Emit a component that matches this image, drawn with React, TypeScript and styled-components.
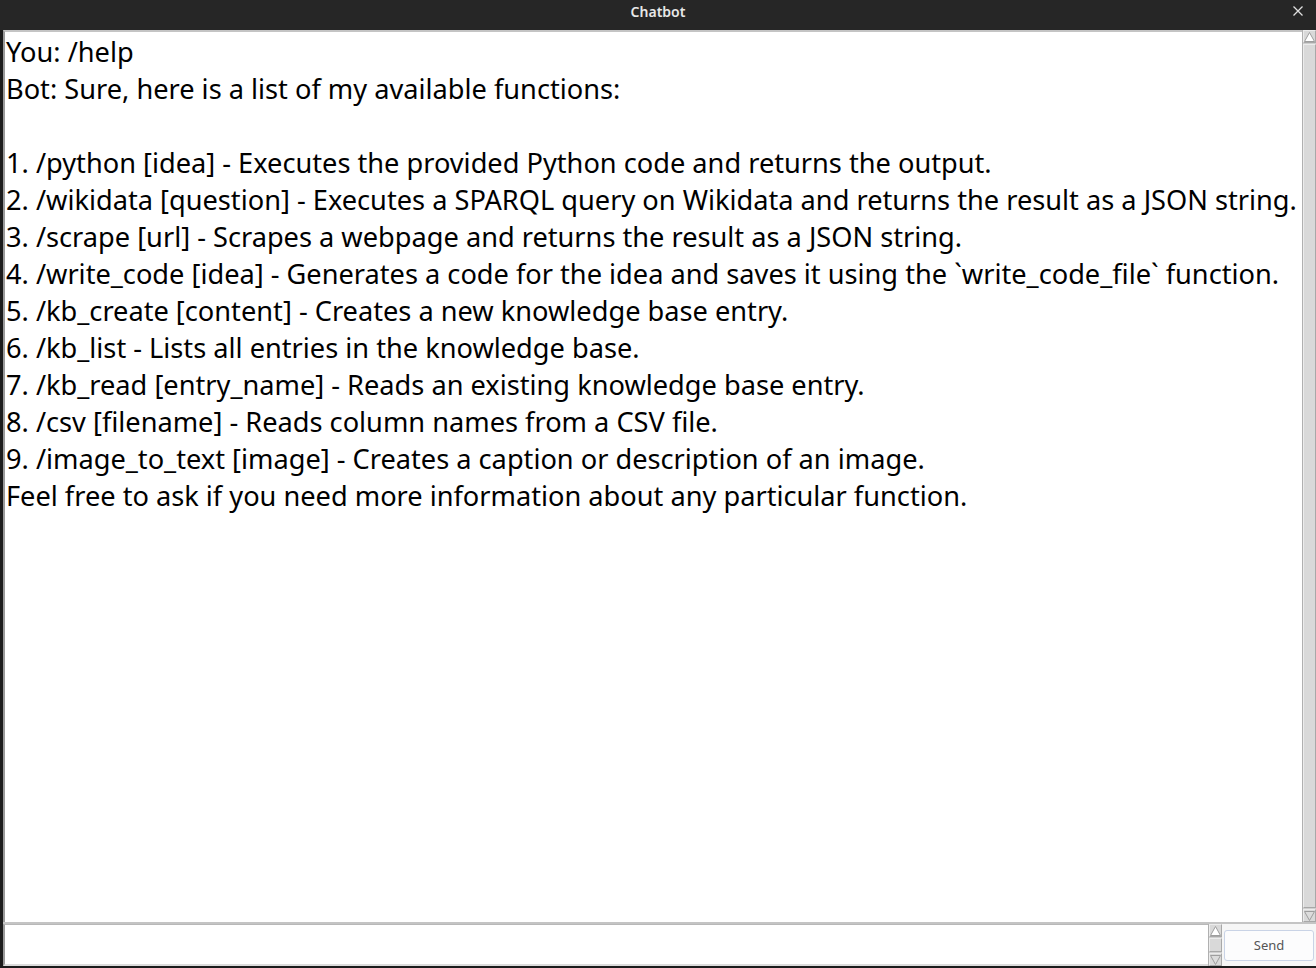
import React from "react";
import styled, { createGlobalStyle } from "styled-components";

const Global = createGlobalStyle`
  html, body { margin: 0; padding: 0; background: #1e1e1e; }
  body { width: 1316px; height: 968px; overflow: hidden; }
  #root { width: 1316px; height: 968px; }
`;

const Window = styled.div`
  width: 1316px;
  height: 968px;
  display: flex;
  flex-direction: column;
  background: #1c1c1c;
  font-family: "Noto Sans", "Open Sans", sans-serif;
`;

const TitleBar = styled.div`
  height: 30px;
  flex: 0 0 30px;
  background: #262626;
  position: relative;
  display: flex;
  align-items: center;
  justify-content: center;
  color: #e8e8e8;
  font-size: 14px;
  font-weight: 600;
  padding-bottom: 7px;
  box-sizing: border-box;
`;

const CloseBtn = styled.div`
  position: absolute;
  right: 12px;
  top: 5px;
  width: 12px;
  height: 12px;
  display: flex;
`;

const Client = styled.div`
  flex: 1;
  display: flex;
  flex-direction: column;
  margin: 0 0 2px 3px;
  background: #d9d9d9;
  min-height: 0;
`;

const ChatRow = styled.div`
  flex: 1;
  display: flex;
  min-height: 0;
  border-bottom: 2px solid #c4c4c4;
`;

const ChatText = styled.div`
  flex: 1;
  background: #fff;
  border-top: 2px solid #c4c4c4;
  border-left: 2px solid #9a9a9a;
  padding: 1px 0 0 1px;
  font-size: 27.2px;
  color: #000;
  white-space: pre;
  overflow: hidden;
`;

const Line = styled.div`
  height: 37px;
  line-height: 37px;
`;

const VScroll = styled.div<{ $w: number }>`
  width: ${(p) => p.$w}px;
  flex: 0 0 ${(p) => p.$w}px;
  display: flex;
  flex-direction: column;
  background: #cfcfcf;
  border-left: 1px solid #b0b0b0;
  box-sizing: border-box;
`;

const Arrow = styled.div`
  height: 13px;
  flex: 0 0 13px;
  background: #d9d9d9;
  display: flex;
  align-items: center;
  justify-content: center;
  border: 1px solid #ececec;
  border-right-color: #a8a8a8;
  border-bottom-color: #a8a8a8;
  box-sizing: border-box;
`;

const Thumb = styled.div`
  flex: 1;
  background: #d9d9d9;
  border: 1px solid #ececec;
  border-right-color: #a8a8a8;
  border-bottom-color: #a8a8a8;
  margin: 1px 0;
`;

const InputRow = styled.div`
  flex: 0 0 42px;
  display: flex;
  align-items: stretch;
  background: #f2f2f2;
`;

const InputField = styled.div`
  flex: 1;
  background: #fff;
  border-top: 1px solid #b8b8b8;
  border-left: 2px solid #9a9a9a;
  border-bottom: 2px solid #dcdcdc;
`;

const ButtonWrap = styled.div`
  flex: 0 0 94px;
  display: flex;
  align-items: center;
  justify-content: center;
  background: #f6f6f6;
`;

const SendButton = styled.button`
  width: 90px;
  height: 31px;
  background: #fcfcfd;
  border: 1px solid #c9d3e6;
  border-radius: 3px;
  color: #555;
  font-family: "Noto Sans", sans-serif;
  font-size: 13px;
  padding: 0;
`;

const Tri = ({ up }: { up: boolean }) => (
  <svg width="11" height="10" viewBox="0 0 11 10">
    {up ? (
      <polygon points="5.5,0.5 10.5,9.5 0.5,9.5" fill="#fff" stroke="#9e9e9e" strokeWidth="1" />
    ) : (
      <polygon points="0.5,0.5 10.5,0.5 5.5,9.5" fill="#dcdcdc" stroke="#9e9e9e" strokeWidth="1" />
    )}
  </svg>
);

const lines = [
  "You: /help",
  "Bot: Sure, here is a list of my available functions:",
  "",
  "1. /python [idea] - Executes the provided Python code and returns the output.",
  "2. /wikidata [question] - Executes a SPARQL query on Wikidata and returns the result as a JSON string.",
  "3. /scrape [url] - Scrapes a webpage and returns the result as a JSON string.",
  "4. /write_code [idea] - Generates a code for the idea and saves it using the `write_code_file` function.",
  "5. /kb_create [content] - Creates a new knowledge base entry.",
  "6. /kb_list - Lists all entries in the knowledge base.",
  "7. /kb_read [entry_name] - Reads an existing knowledge base entry.",
  "8. /csv [filename] - Reads column names from a CSV file.",
  "9. /image_to_text [image] - Creates a caption or description of an image.",
  "Feel free to ask if you need more information about any particular function.",
];

export default function App() {
  return (
    <>
      <Global />
      <Window>
        <TitleBar>
          Chatbot
          <CloseBtn>
            <svg width="12" height="12" viewBox="0 0 12 12">
              <path d="M1.5 1.5 L10.5 10.5 M10.5 1.5 L1.5 10.5" stroke="#e0e0e0" strokeWidth="1.3" />
            </svg>
          </CloseBtn>
        </TitleBar>
        <Client>
          <ChatRow>
            <ChatText>
              {lines.map((l, i) => (
                <Line key={i}>{l}</Line>
              ))}
            </ChatText>
            <VScroll $w={14}>
              <Arrow><Tri up /></Arrow>
              <Thumb />
              <Arrow><Tri up={false} /></Arrow>
            </VScroll>
          </ChatRow>
          <InputRow>
            <InputField />
            <VScroll $w={14}>
              <Arrow><Tri up /></Arrow>
              <Thumb />
              <Arrow><Tri up={false} /></Arrow>
            </VScroll>
            <ButtonWrap>
              <SendButton>Send</SendButton>
            </ButtonWrap>
          </InputRow>
        </Client>
      </Window>
    </>
  );
}
